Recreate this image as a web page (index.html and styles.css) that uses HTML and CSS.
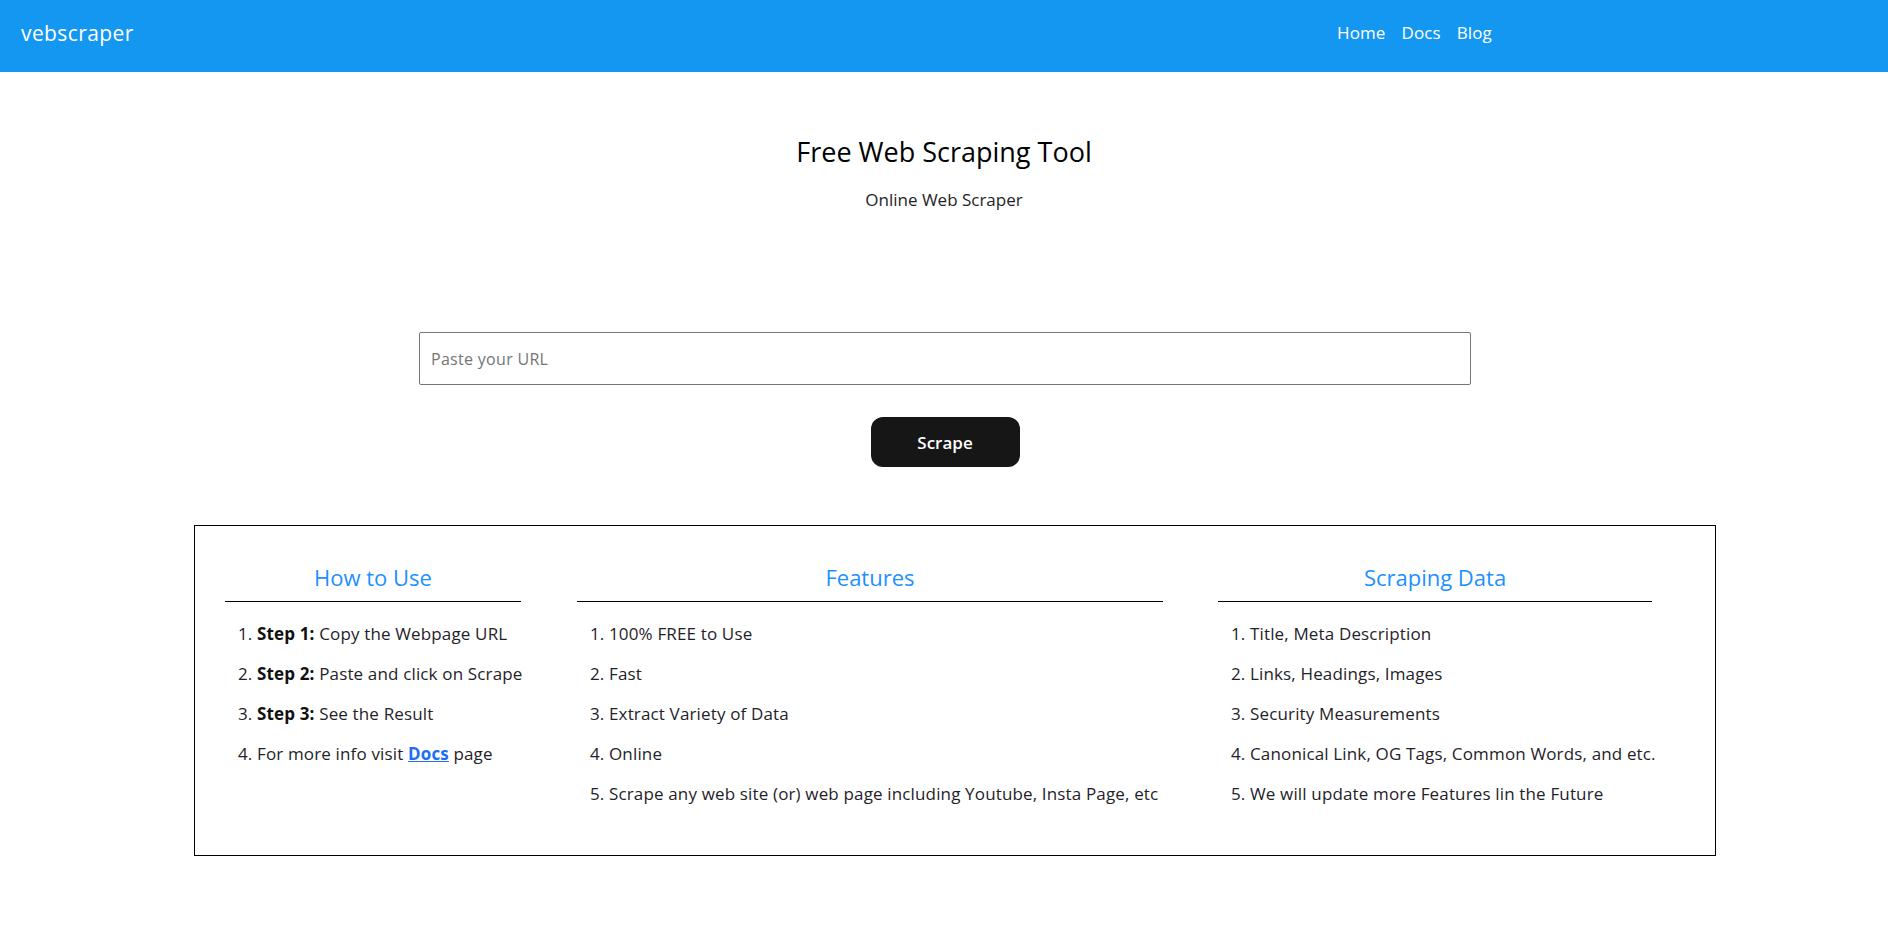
FILE: index.html
```html
<!DOCTYPE html>
<html lang="en">
<head>
<meta charset="utf-8">
<title>vebscraper - Free Web Scraping Tool</title>
<link rel="stylesheet" href="styles.css">
</head>
<body>
<header class="topbar">
  <a class="logo" href="#">vebscraper</a>
  <nav class="nav">
    <a href="#">Home</a>
    <a href="#">Docs</a>
    <a href="#">Blog</a>
  </nav>
</header>

<main class="main">
  <section class="hero">
    <h1 class="title">Free Web Scraping Tool</h1>
    <p class="subtitle">Online Web Scraper</p>
  </section>

  <form class="scrape-form" onsubmit="return false">
    <input class="url-input" type="text" placeholder="Paste your URL">
    <button class="scrape-btn" type="submit">Scrape</button>
  </form>

  <section class="info-box">
    <div class="col col-use">
      <h2 class="col-title">How to Use</h2>
      <ol class="col-list">
        <li><b>Step 1:</b> Copy the Webpage URL</li>
        <li><b>Step 2:</b> Paste and click on Scrape</li>
        <li><b>Step 3:</b> See the Result</li>
        <li>For more info visit <a class="docs-link" href="#">Docs</a> page</li>
      </ol>
    </div>
    <div class="col col-features">
      <h2 class="col-title">Features</h2>
      <ol class="col-list">
        <li>100% FREE to Use</li>
        <li>Fast</li>
        <li>Extract Variety of Data</li>
        <li>Online</li>
        <li>Scrape any web site (or) web page including Youtube, Insta Page, etc</li>
      </ol>
    </div>
    <div class="col col-data">
      <h2 class="col-title">Scraping Data</h2>
      <ol class="col-list">
        <li>Title, Meta Description</li>
        <li>Links, Headings, Images</li>
        <li>Security Measurements</li>
        <li>Canonical Link, OG Tags, Common Words, and etc.</li>
        <li>We will update more Features lin the Future</li>
      </ol>
    </div>
  </section>
</main>
</body>
</html>
```

FILE: styles.css
```css
* { box-sizing: border-box; }

html, body {
  margin: 0;
  padding: 0;
  background: #ffffff;
  font-family: "Open Sans", "Noto Sans", sans-serif;
  color: #1f2329;
}

a { text-decoration: none; }

.topbar {
  height: 72px;
  background: #1497f1;
  display: grid;
  grid-template-columns: 1316px auto;
  align-items: center;
  padding-left: 21px;
}

.logo {
  color: #ffffff;
  font-size: 21px;
  line-height: 28px;
  letter-spacing: 0.4px;
  padding-bottom: 7px;
}

.nav {
  display: flex;
  gap: 16px;
  padding-bottom: 6px;
}

.nav a {
  color: #ffffff;
  font-size: 17px;
  line-height: 24px;
  letter-spacing: 0.1px;
}

.main {
  display: flex;
  flex-direction: column;
}

.hero {
  text-align: center;
  margin-top: 62px;
}

.title {
  margin: 0;
  font-size: 27px;
  line-height: 36px;
  font-weight: 500;
  color: #000000;
}

.subtitle {
  margin: 18px 0 0;
  font-size: 17px;
  line-height: 24px;
  color: #1f2329;
}

.scrape-form {
  display: flex;
  flex-direction: column;
  align-items: center;
  margin-top: 120px;
  padding-left: 2px;
}

.url-input {
  width: 1052px;
  height: 53px;
  border: 1px solid #767676;
  border-radius: 2px;
  padding: 0 11px;
  font-family: inherit;
  font-size: 16px;
  letter-spacing: 0.3px;
  color: #1f2329;
  outline: none;
}

.url-input::placeholder {
  color: #757575;
}

.scrape-btn {
  margin-top: 32px;
  width: 149px;
  height: 50px;
  border: none;
  border-radius: 12px;
  background: #161616;
  color: #ffffff;
  font-family: inherit;
  font-size: 17px;
  font-weight: 600;
  cursor: pointer;
}

.info-box {
  margin: 58px 0 60px 194px;
  width: 1522px;
  border: 1px solid #000000;
  display: flex;
  gap: 56px;
  padding: 36px 0 49px 30px;
}

.col { flex: none; }
.col-use { width: 296px; }
.col-features { width: 586px; margin-right: -1px; }
.col-data { width: 434px; }

.col-title {
  margin: 0;
  text-align: center;
  font-size: 22px;
  line-height: 30px;
  font-weight: 500;
  color: #1e90ff;
  padding-bottom: 9px;
  border-bottom: 1px solid #000000;
}

.col-list {
  margin: 20px 0 0;
  padding-left: 32px;
  font-size: 17px;
  line-height: 24px;
  letter-spacing: 0.15px;
  color: #1f2329;
  white-space: nowrap;
}

.col-list li { margin-bottom: 16px; }
.col-list li:last-child { margin-bottom: 0; }

.col-list b { font-weight: 700; color: #111; }

.docs-link {
  color: #1f6df2;
  font-weight: 700;
  text-decoration: underline;
}
```
